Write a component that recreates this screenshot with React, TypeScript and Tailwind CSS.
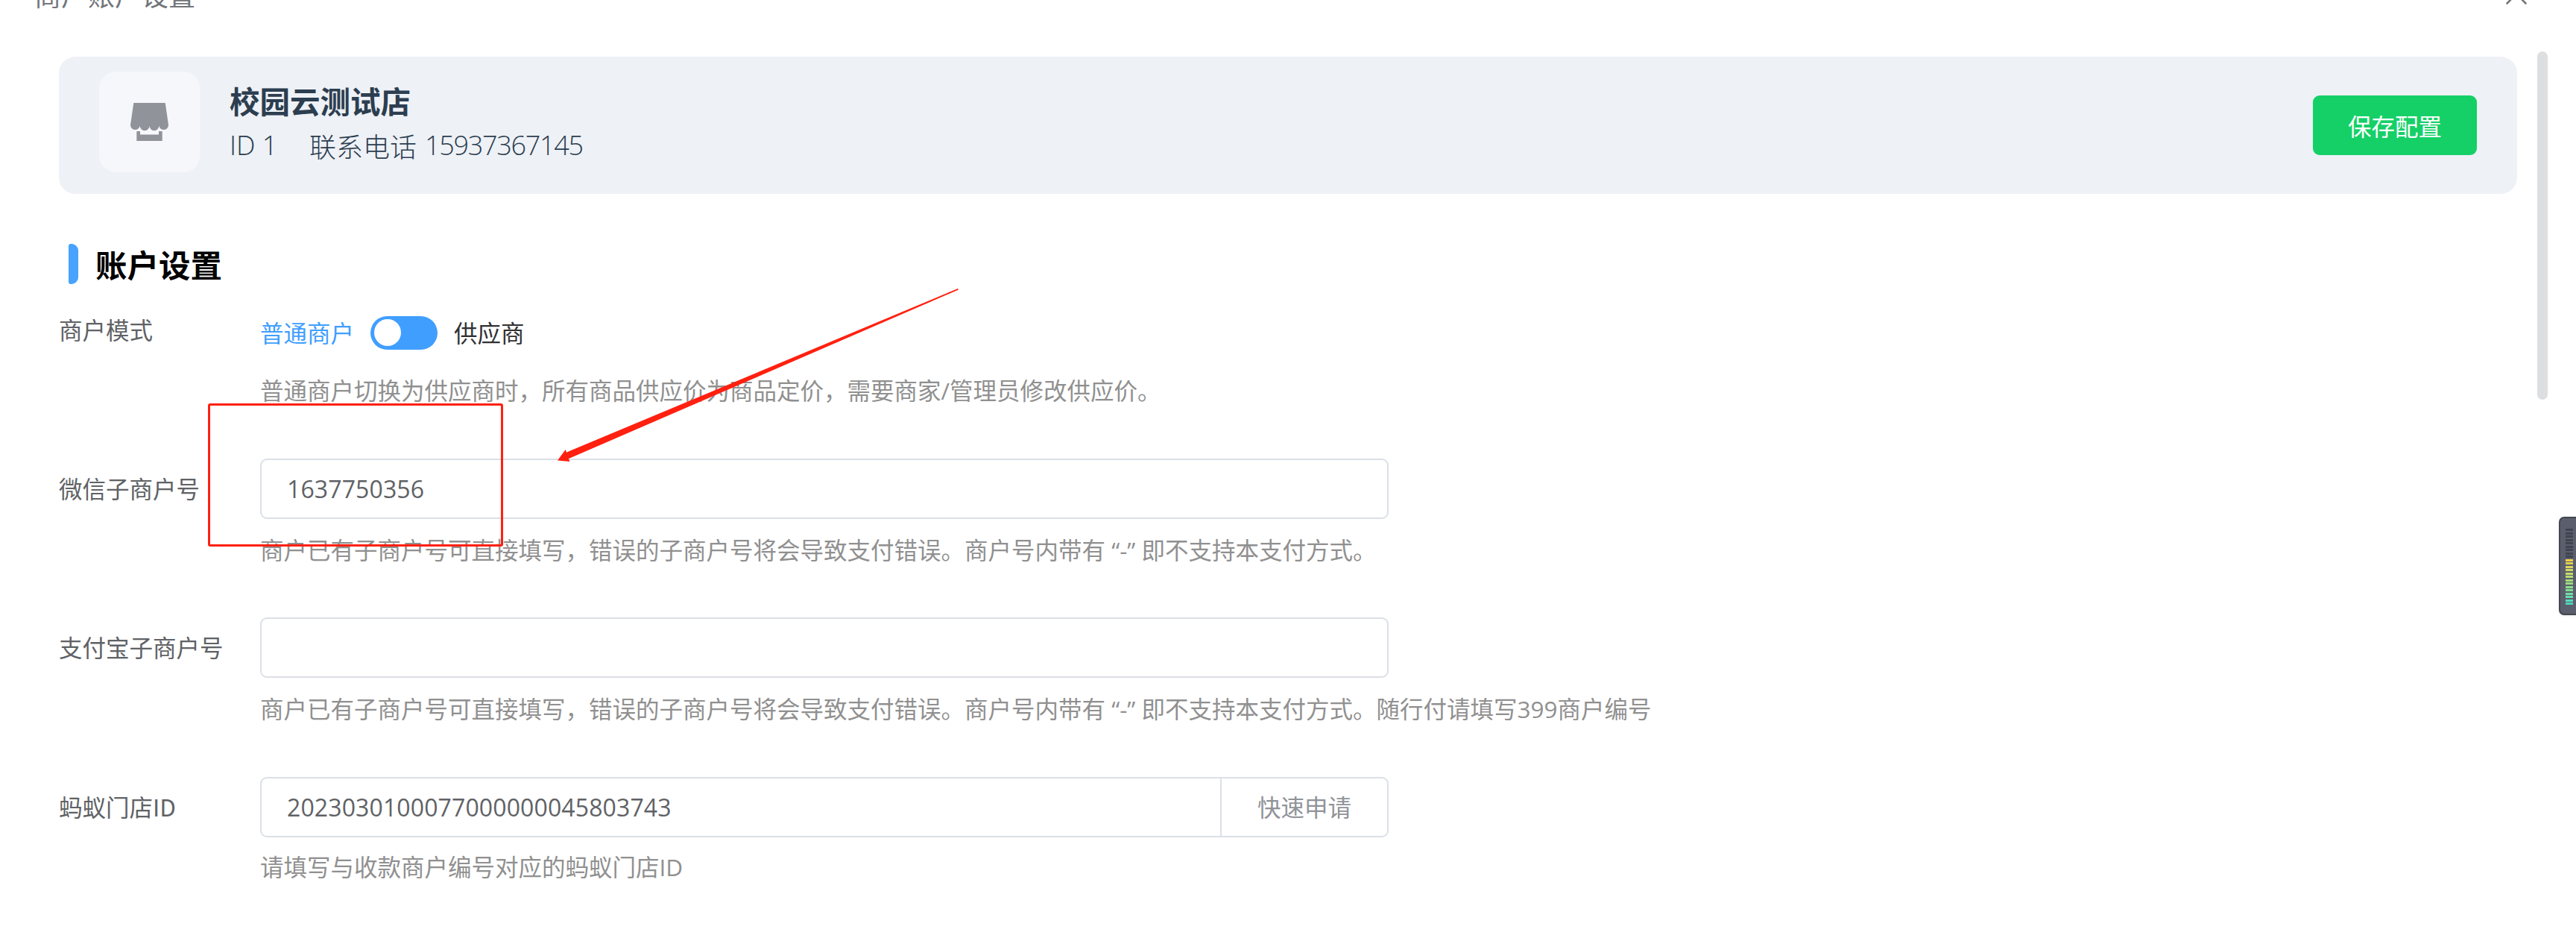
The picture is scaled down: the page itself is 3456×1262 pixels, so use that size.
import { useState, type ReactNode } from 'react';

const SUB_MERCHANT_HELP =
  '商户已有子商户号可直接填写，错误的子商户号将会导致支付错误。商户号内带有 “-” 即不支持本支付方式。';

function ShopIcon() {
  return (
    <svg viewBox="0 0 51 51" className="h-[51px] w-[51px] fill-[#909399]">
      <path d="M4.3 0H46.7L51 29.6a6.4 6.4 0 0 1-12.7 1.2a6.4 6.4 0 0 1-12.8 0a6.4 6.4 0 0 1-12.8 0A6.4 6.4 0 0 1 0 29.6Z" />
      <path d="M8.3 38H13V42.5H38V38H42.7V51H8.3Z" />
    </svg>
  );
}

function FormRow({
  label,
  help,
  className,
  children,
}: {
  label: string;
  help: string;
  className: string;
  children: ReactNode;
}) {
  return (
    <div className={`flex ${className}`}>
      <div className="w-[270px] shrink-0 whitespace-nowrap text-[#606266]">
        {label}
      </div>
      <div>
        {children}
        <p className="font-['Open_Sans','Noto_Sans_CJK_SC',sans-serif] whitespace-nowrap text-[#909090]">
          {help}
        </p>
      </div>
    </div>
  );
}

function LevelMeter() {
  const colors = [
    '#f2cf45', '#dfd052', '#d9d65c', '#d0da62', '#c5dc6a', '#b4dc70', '#a8dc78',
    '#9adc80', '#8cdc8a', '#80dc96', '#74dca4', '#66dcb0', '#5adcbc', '#50d4bc',
  ];
  const bars = [...Array(9).fill('#41444f'), ...colors];

  return (
    <div className="absolute top-[693px] right-0 flex h-[132px] w-[23px] flex-col gap-[1.5px] rounded-l-[7px] border-2 border-r-0 border-[#43464f] bg-[#5b5f6d] pt-[14px] pl-[7px] shadow">
      {bars.map((color, i) => (
        <span
          key={i}
          className="h-[3px] w-[10px] shrink-0"
          style={{ backgroundColor: color }}
        />
      ))}
    </div>
  );
}

export default function App() {
  const [wechatId, setWechatId] = useState('1637750356');
  const [alipayId, setAlipayId] = useState('');
  const [antShopId, setAntShopId] = useState('2023030100077000000045803743');

  return (
    <div className="relative h-[1262px] w-[3456px] overflow-hidden bg-white font-['Noto_Sans_CJK_SC',sans-serif] text-[31.5px] leading-[46px]">
      {/* Dialog header */}
      <div className="flex h-[76px] items-start justify-between pr-[66px] pl-[46px]">
        <h1 className="-mt-[31px] text-[36px] text-[#72767b]">商户账户设置</h1>
        <svg
          viewBox="0 0 28 28"
          className="-mt-[22px] h-7 w-7 fill-none stroke-[#73767a] stroke-[2.6]"
        >
          <path d="M1.5 1.5L26.5 26.5M26.5 1.5L1.5 26.5" strokeLinecap="round" />
        </svg>
      </div>

      {/* Merchant card */}
      <div className="ml-[79px] flex h-[184px] w-[3298px] items-start rounded-[22px] bg-[#eef1f6] pt-5 pr-[54px] pl-[54px] text-[#2c3e50]">
        <div className="flex h-[135px] w-[135px] items-center justify-center rounded-[22px] bg-[#f5f7fb]">
          <ShopIcon />
        </div>
        <div className="ml-10">
          <div className="mt-[9px] text-[40.5px] leading-[60px] font-bold">
            校园云测试店
          </div>
          <div className="flex text-[36px] leading-[60px] font-light">
            <span className="w-[107px] font-['Open_Sans','Noto_Sans_CJK_SC',sans-serif]">
              ID 1
            </span>
            <span>联系电话</span>
            <span className="ml-[11px] font-['Open_Sans',sans-serif] tracking-[-1.3px]">
              15937367145
            </span>
          </div>
        </div>
        <button className="mt-8 ml-auto h-20 w-[220px] rounded-[9px] bg-[#15d067] text-white">
          保存配置
        </button>
      </div>

      {/* Account settings */}
      <div className="pl-[79px]">
        <div className="mt-[67px] ml-[13px] flex h-[54px] items-center">
          <span className="h-[54px] w-[13px] rounded-l-[3px] rounded-r-[9px] bg-[#48a2ff]" />
          <h2 className="ml-[23px] text-[42.5px] font-bold text-black">账户设置</h2>
        </div>

        <FormRow
          label="商户模式"
          help="普通商户切换为供应商时，所有商品供应价为商品定价，需要商家/管理员修改供应价。"
          className="mt-[37px]"
        >
          <div className="mt-[5px] mb-[32px] flex h-[46px] items-center">
            <span className="pb-[3px] text-[#409eff]">普通商户</span>
            <span className="ml-[22px] flex h-[45px] w-[90px] items-center rounded-full bg-[#409eff] pl-[5px]">
              <span className="h-9 w-9 rounded-full bg-white" />
            </span>
            <span className="ml-[22px] pb-[3px] text-[#303133]">供应商</span>
          </div>
        </FormRow>

        <FormRow
          label="微信子商户号"
          help={SUB_MERCHANT_HELP}
          className="mt-[68px] *:first:mt-[16px]"
        >
          <input
            value={wechatId}
            onChange={(e) => setWechatId(e.target.value)}
            className="mb-[19px] block h-[81px] w-[1514px] rounded-[9px] border-2 border-[#dcdfe6] px-[34px] font-['Open_Sans',sans-serif] text-[32px] tracking-[0.12px] text-[#606266]"
          />
        </FormRow>

        <FormRow
          label="支付宝子商户号"
          help={`${SUB_MERCHANT_HELP}随行付请填写399商户编号`}
          className="mt-[67px] *:first:mt-[16px]"
        >
          <input
            value={alipayId}
            onChange={(e) => setAlipayId(e.target.value)}
            className="mb-[19px] block h-[81px] w-[1514px] rounded-[9px] border-2 border-[#dcdfe6] px-[34px] font-['Open_Sans',sans-serif] text-[32px] tracking-[0.12px] text-[#606266]"
          />
        </FormRow>

        <FormRow
          label="蚂蚁门店ID"
          help="请填写与收款商户编号对应的蚂蚁门店ID"
          className="mt-[68px] *:first:mt-[16px]"
        >
          <div className="mb-[17px] flex h-[81px] w-[1514px] rounded-[9px] border-2 border-[#dcdfe6]">
            <input
              value={antShopId}
              onChange={(e) => setAntShopId(e.target.value)}
              className="min-w-0 flex-1 px-[34px] font-['Open_Sans',sans-serif] text-[32px] tracking-[0.12px] text-[#606266]"
            />
            <button className="w-[224px] border-l-2 border-[#dcdfe6] pb-[3px] text-[#909399]">
              快速申请
            </button>
          </div>
        </FormRow>
      </div>

      {/* Scrollbar */}
      <div className="absolute top-[69px] right-[38px] h-[467px] w-[14px] rounded-full bg-[#dddee0]" />

      <LevelMeter />

      {/* Markup over the form */}
      <div className="absolute top-[541px] left-[279px] h-[192px] w-[396px] rounded-[3px] border-3 border-[#ff2010]" />
      <svg
        viewBox="0 0 540 234"
        className="absolute top-[386px] left-[748px] h-[234px] w-[540px] fill-[#ff2010]"
      >
        <path d="M0 231.5L10.7 217L12 220.7L537 1L538 2.5L14.7 229.3L16.7 233Z" />
      </svg>
    </div>
  );
}
